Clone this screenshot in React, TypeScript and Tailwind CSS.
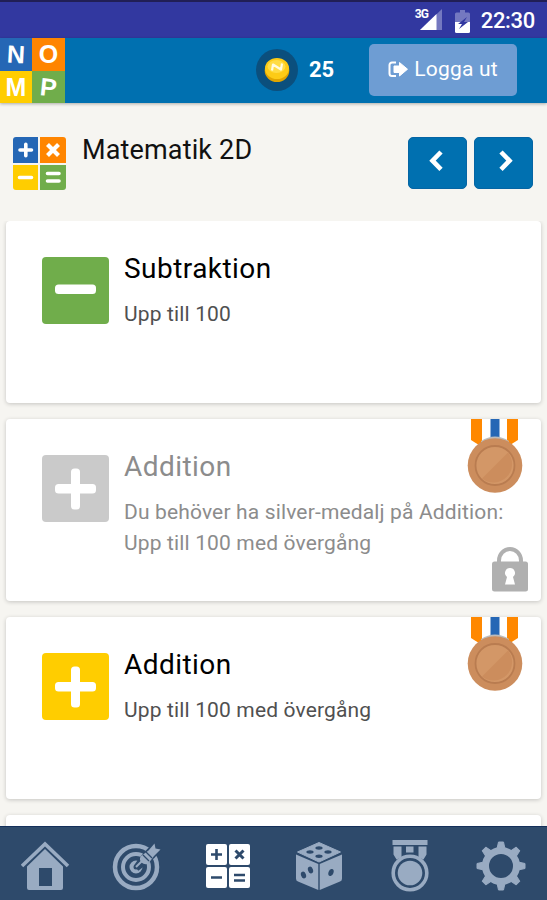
import type { ReactNode } from 'react';

type Symbol = 'plus' | 'minus';

interface Exercise {
  id: number;
  title: string;
  description: string;
  symbol: Symbol;
  color: string;
  medal?: boolean;
  locked?: boolean;
}

const exercises: Exercise[] = [
  { id: 1, title: 'Subtraktion', description: 'Upp till 100', symbol: 'minus', color: 'bg-[#70ad4b]' },
  {
    id: 2,
    title: 'Addition',
    description: 'Du behöver ha silver-medalj på Addition: Upp till 100 med övergång',
    symbol: 'plus',
    color: 'bg-[#cacaca]',
    medal: true,
    locked: true,
  },
  { id: 3, title: 'Addition', description: 'Upp till 100 med övergång', symbol: 'plus', color: 'bg-[#ffcd00]', medal: true },
];

const StatusBar = () => (
  <div className="h-[38px] shrink-0 bg-[#3238a0] border-t-2 border-[#211f56] flex items-center justify-end pt-[2px] pr-[12px] text-white">
    <div className="relative mr-[12px]">
      <svg width="28" height="24" viewBox="0 0 28 24">
        <path d="M27 0v21H5z" fill="#7478c0" />
        <path d="M21.500 5V21H5z" fill="#fff" />
        <path d="M0 0h15v10H0z" fill="#3238a0" />
      </svg>
      <span className="absolute left-0 -top-[2px] text-[12px] leading-[14px] font-bold tracking-[-0.8px]">3G</span>
    </div>
    <svg width="15" height="23" viewBox="0 0 15 23" className="mr-[11px]">
      <path d="M5 0h5v2.500h3.500a1.500 1.500 0 0 1 1.500 1.500V12H0V4a1.500 1.500 0 0 1 1.500-1.500H5z" fill="#7478c0" />
      <path d="M0 12h15v9.500a1.500 1.500 0 0 1-1.500 1.500h-12A1.500 1.500 0 0 1 0 21.500z" fill="#fff" />
      <path d="M12 7 3 14h4l-3 5 9-7H9z" fill="#3238a0" />
    </svg>
    <span className="text-[22px] leading-none font-medium tracking-[-0.3px]">22:30</span>
  </div>
);

const Logo = () => (
  <div className="grid grid-cols-[32px_33px] grid-rows-[33px_32px] text-white text-[25px] font-bold leading-none font-['Liberation_Sans',sans-serif]">
    <span className="bg-[#2567b5] flex items-center justify-center"><span className="rotate-3">N</span></span>
    <span className="bg-[#ff8500] flex items-center justify-center"><span>O</span></span>
    <span className="bg-[#ffcd00] flex items-center justify-center"><span>M</span></span>
    <span className="bg-[#70ad4b] flex items-center justify-center"><span className="rotate-6">P</span></span>
  </div>
);

const Coin = () => (
  <svg width="42" height="42" viewBox="0 0 42 42">
    <circle cx="21" cy="21" r="21" fill="#0b4f7d" />
    <ellipse cx="21" cy="21.500" rx="12.300" ry="11.500" fill="#e2a500" />
    <ellipse cx="21" cy="19.500" rx="12" ry="10.500" fill="#fdcb16" />
    <ellipse cx="20.500" cy="17.500" rx="9" ry="6.500" fill="#ffdc45" />
    <path d="m16 21.500 1-6 8 5 1-6" fill="none" stroke="#fffbe0" strokeWidth="2.200" strokeLinejoin="round" />
  </svg>
);

const Header = () => (
  <header className="h-[65px] shrink-0 bg-[#0070b0] flex items-center shadow-[0_1px_3px_rgba(0,0,0,0.3)] text-white">
    <Logo />
    <div className="ml-auto mb-[2px] flex items-center">
      <Coin />
      <span className="ml-[11px] w-[60px] text-[22px] leading-none font-bold">25</span>
    </div>
    <button className="w-[148px] h-[52px] mr-[30px] mb-px rounded-[5px] bg-[#6e9dd3] flex items-center justify-center text-[21px]">
      <svg width="20" height="17" viewBox="0 0 20 17" className="mr-[6px] mb-[2px]">
        <path d="M8 1.500H4A2.500 2.500 0 0 0 1.500 4v8.500A2.500 2.500 0 0 0 4 15h4" fill="none" stroke="#fff" strokeWidth="2" />
        <path d="M11.500 1.500 19.500 8.200l-8 6.800V11.500H6V5h5.500z" fill="#fff" stroke="#fff" strokeLinejoin="round" />
      </svg>
      <span className="tracking-[0.2px]">Logga ut</span>
    </button>
  </header>
);

const MathIcon = () => (
  <svg width="54" height="54" viewBox="0 0 54 54">
    <path d="M4 0h22v26H1V3a3 3 0 0 1 3-3z" fill="#2567b5" />
    <path d="M28 0h23a3 3 0 0 1 3 3v23H28z" fill="#ff8500" />
    <path d="M1 28h25v25H4a3 3 0 0 1-3-3z" fill="#ffcd00" />
    <path d="M28 28h26v22a3 3 0 0 1-3 3H28z" fill="#70ad4b" />
    <g stroke="#fff" strokeWidth="3.600" strokeLinecap="round">
      <path d="M8 13h11.500M13.800 7.300v11.500M7.500 40.500h12M35.500 36.500h11.500M35.500 44h11.500" />
      <path d="m35.500 7.500 11 11m0-11-11 11" strokeLinecap="butt" strokeWidth="4.200" />
    </g>
  </svg>
);

const Chevron = ({ path }: { path: string }) => (
  <button className="w-[59px] h-[52px] rounded-[5px] bg-[#0070b0] border border-[#0565a4] flex justify-center pt-[12px]">
    <svg width="18" height="22" viewBox="0 0 18 22">
      <path d={path} fill="none" stroke="#fff" strokeWidth="4.600" />
    </svg>
  </button>
);

const Medal = () => (
  <svg width="56" height="74" viewBox="0 0 56 74" className="absolute top-0 right-[18px]">
    <path d="M4 0h11v28L4 21z" fill="#ff8800" />
    <path d="M40 0h11v21l-11 7z" fill="#ff8800" />
    <path d="M23.500 0h9v22h-9z" fill="#2567b5" />
    <path d="M14 22q14-9 28 0v6H14z" fill="#bcbcbc" />
    <circle cx="28" cy="46.500" r="27.300" fill="#cc8d5d" />
    <circle cx="28" cy="46.500" r="19.500" fill="#d39767" stroke="#b97c50" strokeWidth="1.800" />
    <path d="M41 33.500A18.500 18.500 0 0 1 15 59.500z" fill="#cc8d5d" />
  </svg>
);

const Lock = () => (
  <svg width="38" height="46" viewBox="0 0 38 46" className="absolute right-[12px] bottom-[9px]">
    <path d="M8 18V14.500a11 11.500 0 0 1 22 0V18" fill="none" stroke="#b0b0b0" strokeWidth="4" />
    <rect x="1" y="15.500" width="36" height="30" rx="2.500" fill="#b0b0b0" />
    <path d="M19 22a5 5 0 0 1 3 9L24 38.500H14l2-7.500a5 5 0 0 1 3-9z" fill="#fff" />
  </svg>
);

const ExerciseCard = ({ exercise }: { exercise: Exercise }) => (
  <div className="relative h-[182px] shrink-0 bg-white rounded-[4px] shadow-[0_1px_4px_rgba(0,0,0,0.2)] flex pl-[36px] pt-[36px]">
    <div className={`w-[67px] h-[67px] shrink-0 rounded-[4px] ${exercise.color}`}>
      <svg width="67" height="67" viewBox="0 0 67 67">
        <rect x="13" y={exercise.symbol === 'minus' ? 27.5 : 29} width="41" height="9.500" rx="3.500" fill="#fff" />
        {exercise.symbol === 'plus' && <rect x="29" y="13.500" width="9" height="41" rx="3.500" fill="#fff" />}
      </svg>
    </div>
    <div className={`ml-[15px] w-[400px] ${exercise.locked ? 'text-[#8c8c8c]' : 'text-black'}`}>
      <h2 className="text-[28px] leading-[24px] tracking-[0.45px]">{exercise.title}</h2>
      <p className={`mt-[18px] text-[21px] leading-[30.500px] tracking-[0.15px] ${exercise.locked ? '' : 'text-[#505050]'}`}>
        {exercise.description}
      </p>
    </div>
    {exercise.medal && <Medal />}
    {exercise.locked && <Lock />}
  </div>
);

const NavItem = ({ children }: { children: ReactNode }) => (
  <button className="flex-1 flex justify-center text-[#99abc2]">
    <svg width="50" height="54" viewBox="0 0 50 54">{children}</svg>
  </button>
);

const BottomNav = () => (
  <nav className="h-[74px] shrink-0 bg-[#2e4a6b] border-t border-[#14305b] pt-[12px] flex items-start">
    <NavItem>
      <path d="M1 27 24 5 47 27" fill="none" stroke="currentColor" strokeWidth="3.600" />
      <path
        d="M24 10 42 27.500V49a2 2 0 0 1-2 2H8a2 2 0 0 1-2-2V27.500zM18 29v18h13V29z"
        fill="currentColor"
        fillRule="evenodd"
      />
    </NavItem>
    <NavItem>
      <g fill="none" stroke="currentColor">
        <circle cx="24" cy="28" r="21" strokeWidth="4.500" />
        <circle cx="24" cy="28" r="13" strokeWidth="4" />
        <circle cx="24" cy="28" r="4.500" strokeWidth="4" />
      </g>
      <path d="M23.500 26.500 28 20l8-9 7-7 1.500 5 4 1-7 8-9 7.500-6 4.500z" fill="#2e4a6b" stroke="#2e4a6b" strokeWidth="2.500" />
      <path d="m24 28 7-7" stroke="currentColor" strokeWidth="2" />
      <path d="m28.500 17.500 8-6 6-7 1 5 5 1-6.500 6.500-6 8q-4 1-6.500-1.500t-1-6z" fill="currentColor" />
      <path d="m31 16 6 6m-3-9 6 6" stroke="#2e4a6b" strokeWidth="1.300" />
    </NavItem>
    <NavItem>
      <rect x="3" y="5" width="21" height="21" rx="2" fill="#fff" />
      <rect x="26" y="5" width="21" height="21" rx="2" fill="#fff" />
      <rect x="3" y="28" width="21" height="21" rx="2" fill="#fff" />
      <rect x="26" y="28" width="21" height="21" rx="2" fill="#fff" />
      <g stroke="#2e4a6b" strokeWidth="2.600">
        <path d="M8 15.500h11M13.500 10v11M8 38.500h11M31 36h11M31 41.500h11" />
        <path d="m32.500 11.500 8 8m0-8-8 8" strokeWidth="3" />
      </g>
    </NavItem>
    <NavItem>
      <path d="M25 3.500 46.500 13 25 23 3.500 13z" fill="currentColor" stroke="currentColor" strokeLinejoin="round" />
      <path d="M2 15.500 24.300 25v26L4 42.500a3 3 0 0 1-2-3z" fill="currentColor" />
      <path d="M48 15.500 25.700 25v26L46 42.500a3 3 0 0 0 2-3z" fill="currentColor" />
      <g fill="#2e4a6b">
        <ellipse cx="25" cy="9" rx="3.600" ry="1.700" />
        <ellipse cx="16" cy="13" rx="3.600" ry="1.700" />
        <ellipse cx="34" cy="13" rx="3.600" ry="1.700" />
        <ellipse cx="25" cy="17.200" rx="3.600" ry="1.700" />
        <ellipse cx="16.500" cy="31" rx="2.500" ry="3.400" transform="rotate(-20 16.500 31)" />
        <ellipse cx="9.500" cy="36" rx="2.500" ry="3.400" transform="rotate(-20 9.500 36)" />
        <ellipse cx="37" cy="33.500" rx="2.500" ry="3.600" transform="rotate(20 37 33.500)" />
      </g>
    </NavItem>
    <NavItem>
      <path d="M7.500 1h35v5h-35zM8.500 7.500h8v11l-5 2-3-5zM21 7.500h7.500v6H21zM33.500 7.500h8v8l-3 5-5-2z" fill="currentColor" />
      <circle cx="25" cy="34" r="16.800" fill="none" stroke="currentColor" strokeWidth="3.600" />
      <circle cx="25" cy="34" r="12.300" fill="currentColor" />
    </NavItem>
    <NavItem>
      <circle cx="25" cy="27" r="15.500" fill="none" stroke="currentColor" strokeWidth="7" />
      {[0, 45, 90, 135, 180, 225, 270, 315].map((angle) => (
        <path
          key={angle}
          d="M22.500 3h5l1.300 6 2.700 3h-13l2.700-3z"
          fill="currentColor"
          stroke="currentColor"
          strokeLinejoin="round"
          transform={`rotate(${angle} 25 27)`}
        />
      ))}
    </NavItem>
  </nav>
);

const App = () => {
  return (
    <div className="w-[547px] h-[900px] overflow-hidden flex flex-col bg-[#f6f5f1] font-['Roboto',sans-serif]">
      <StatusBar />
      <Header />
      <div className="h-[118px] shrink-0 flex items-start pl-[12px] pr-[14px] pt-[34px]">
        <MathIcon />
        <h1 className="ml-[16px] text-[27px] leading-[26px] text-[#111] tracking-[0.15px]">Matematik 2D</h1>
        <div className="ml-auto flex gap-[7px]">
          <Chevron path="M12 2 3.500 10.700l8.500 8.700" />
          <Chevron path="M6 2l8.500 8.700L6 19.400" />
        </div>
      </div>
      <main className="flex-1 min-h-0 overflow-hidden flex flex-col gap-[16px] pl-[6px] pr-[6px]">
        {exercises.map((exercise) => (
          <ExerciseCard key={exercise.id} exercise={exercise} />
        ))}
        <div className="h-[182px] shrink-0 bg-white rounded-[4px] shadow-[0_1px_4px_rgba(0,0,0,0.2)]" />
      </main>
      <BottomNav />
    </div>
  );
};

export default App;
